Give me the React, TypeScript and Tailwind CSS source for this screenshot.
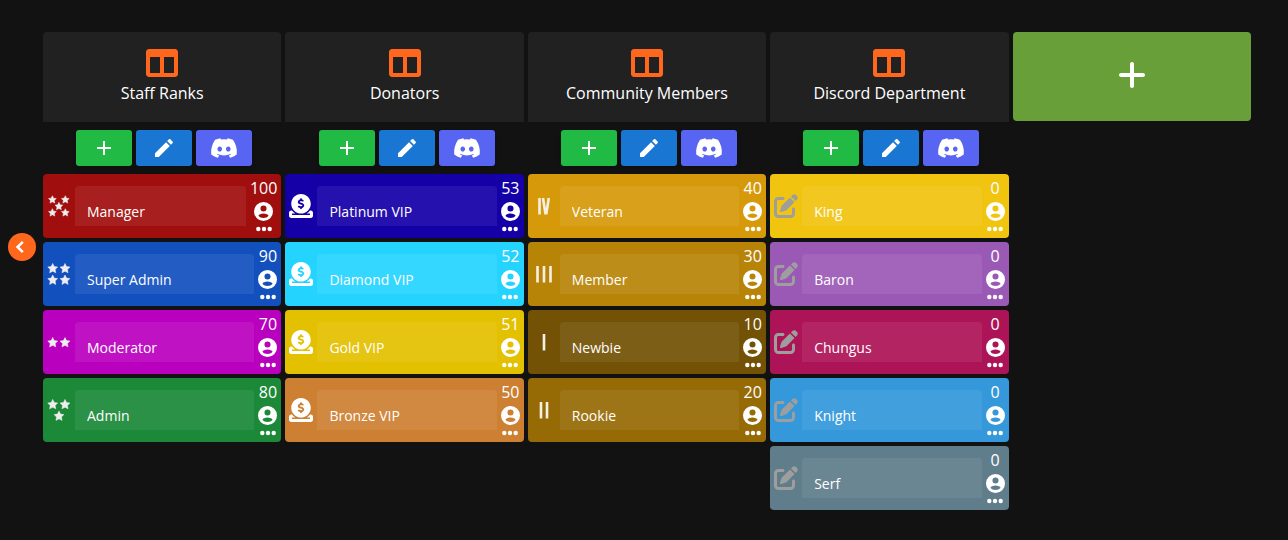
import React from "react";
import { FaColumns, FaDiscord } from "react-icons/fa";
import { FaPlus, FaCircleDollarToSlot, FaPenToSquare } from "react-icons/fa6";

type IconKind = "stars" | "coin" | "roman" | "edit";
type Rank = { name: string; weight: number; bg: string; icon: IconKind; count: number };
type Column = { title: string; ranks: Rank[] };

const columns: Column[] = [
  {
    title: "Staff Ranks",
    ranks: [
      { name: "Manager", weight: 100, bg: "bg-[#a00e0e]", icon: "stars", count: 5 },
      { name: "Super Admin", weight: 90, bg: "bg-[#1250be]", icon: "stars", count: 4 },
      { name: "Moderator", weight: 70, bg: "bg-[#b900be]", icon: "stars", count: 2 },
      { name: "Admin", weight: 80, bg: "bg-[#1b8938]", icon: "stars", count: 3 },
    ],
  },
  {
    title: "Donators",
    ranks: [
      { name: "Platinum VIP", weight: 53, bg: "bg-[#1500a8]", icon: "coin", count: 0 },
      { name: "Diamond VIP", weight: 52, bg: "bg-[#24d4ff]", icon: "coin", count: 0 },
      { name: "Gold VIP", weight: 51, bg: "bg-[#e3c000]", icon: "coin", count: 0 },
      { name: "Bronze VIP", weight: 50, bg: "bg-[#cd7f32]", icon: "coin", count: 0 },
    ],
  },
  {
    title: "Community Members",
    ranks: [
      { name: "Veteran", weight: 40, bg: "bg-[#d6990a]", icon: "roman", count: 4 },
      { name: "Member", weight: 30, bg: "bg-[#b88408]", icon: "roman", count: 3 },
      { name: "Newbie", weight: 10, bg: "bg-[#735205]", icon: "roman", count: 1 },
      { name: "Rookie", weight: 20, bg: "bg-[#966b06]", icon: "roman", count: 2 },
    ],
  },
  {
    title: "Discord Department",
    ranks: [
      { name: "King", weight: 0, bg: "bg-[#f1c40f]", icon: "edit", count: 0 },
      { name: "Baron", weight: 0, bg: "bg-[#9b59b6]", icon: "edit", count: 0 },
      { name: "Chungus", weight: 0, bg: "bg-[#ad1457]", icon: "edit", count: 0 },
      { name: "Knight", weight: 0, bg: "bg-[#3498db]", icon: "edit", count: 0 },
      { name: "Serf", weight: 0, bg: "bg-[#607d8b]", icon: "edit", count: 0 },
    ],
  },
];

// Each star is [centre x, centre y, radius] in a 24 unit box.
const starLayouts: Record<number, [number, number, number][]> = {
  2: [[5.7, 12.7, 5.2], [18, 12.7, 5.2]],
  3: [[5.7, 6.6, 5.2], [18, 6.6, 5.2], [12, 18.2, 5.2]],
  4: [[5.7, 6.6, 5.2], [18, 6.6, 5.2], [5.7, 18.2, 5.2], [18, 18.2, 5.2]],
  5: [[5.4, 5.8, 4.1], [18.3, 5.8, 4.1], [11.9, 12.4, 4.1], [5.4, 18.8, 4.1], [18.3, 18.8, 4.1]],
};

function starPoints(cx: number, cy: number, r: number) {
  return Array.from({ length: 10 }, (_, i) => {
    const radius = i % 2 ? r * 0.5 : r;
    const angle = (Math.PI / 5) * i - Math.PI / 2;
    return `${cx + radius * Math.cos(angle)},${cy + radius * Math.sin(angle)}`;
  }).join(" ");
}

const romanPaths: Record<number, string> = {
  1: "M12 4v16.500",
  2: "M9 4v16.500M15 4v16.500",
  3: "M5.500 4v16.500M12 4v16.500M18.500 4v16.500",
  4: "M7.500 4v16.500M11 4l2.400 15.300h1L16.800 4",
};

function RankIcon({ rank }: { rank: Rank }) {
  if (rank.icon === "coin") return <FaCircleDollarToSlot className="size-6" />;
  if (rank.icon === "edit") return <FaPenToSquare className="size-6 text-[#9e9e9e]" />;
  if (rank.icon === "roman")
    return (
      <svg viewBox="0 0 24 24" className="size-6" fill="none" stroke="#f5f0e6" strokeWidth="2.6">
        <path d={romanPaths[rank.count]} />
      </svg>
    );
  return (
    <svg viewBox="0 0 24 24" className="size-6" fill="#eeeeee" stroke="#eeeeee" strokeWidth=".5" strokeLinejoin="round">
      {starLayouts[rank.count].map(([x, y, r]) => (
        <polygon key={`${x}-${y}`} points={starPoints(x, y, r)} />
      ))}
    </svg>
  );
}

const mdi = {
  plus: "M19 13h-6v6h-2v-6H5v-2h6V5h2v6h6v2z",
  pencil:
    "M20.710 7.040c.39-.39.39-1.040 0-1.410l-2.340-2.340c-.37-.39-1.020-.39-1.410 0l-1.840 1.830 3.750 3.750M3 17.250V21h3.750L17.810 9.930l-3.750-3.750L3 17.250z",
};

function Icon({ d, className }: { d: string; className: string }) {
  return (
    <svg viewBox="0 0 24 24" fill="currentColor" className={className} aria-hidden="true">
      <path d={d} />
    </svg>
  );
}

function AccountIcon() {
  return (
    <svg viewBox="0 0 20 20" fill="currentColor" className="size-[19px]" aria-hidden="true">
      <path
        fillRule="evenodd"
        d="M10 0a10 10 0 1 0 0 20 10 10 0 0 0 0-20zm0 3.600a3.200 3.200 0 1 1 0 6.400 3.200 3.200 0 0 1 0-6.400zm0 8.400c2.600 0 4.900 1 5.300 2.400-1.200 1.500-3 2.400-5.300 2.400s-4.100-.9-5.300-2.400C5.100 13 7.400 12 10 12z"
      />
    </svg>
  );
}

function RankCard({ rank }: { rank: Rank }) {
  return (
    <li className={`flex h-16 items-center gap-1 rounded px-1 ${rank.bg}`}>
      <span className="flex w-6 shrink-0 justify-center">
        <RankIcon rank={rank} />
      </span>
      <input
        aria-label="Rank name"
        defaultValue={rank.name}
        className="h-10 min-w-0 flex-1 rounded-t bg-white/[0.07] px-3 pt-2.5 text-sm text-white outline-none"
      />
      <div className="flex h-full shrink-0 flex-col items-center pt-0.5">
        <span className="text-base leading-6">{rank.weight}</span>
        <button type="button" aria-label={`${rank.name} members`} className="mt-0.5 block">
          <AccountIcon />
        </button>
        <button type="button" aria-label={`${rank.name} options`} className="mt-[5px] block">
          <svg viewBox="0 0 16 6" className="h-1.5 w-4" fill="currentColor">
            <circle cx="2.300" cy="3" r="2.200" />
            <circle cx="8" cy="3" r="2.200" />
            <circle cx="13.700" cy="3" r="2.200" />
          </svg>
        </button>
      </div>
    </li>
  );
}

const action = "flex h-9 w-14 items-center justify-center rounded-[3px] shadow-md";

export default function App() {
  return (
    <main className="flex min-h-screen items-start bg-[#121212] pt-8 pr-[37px] pl-2 font-['Open_Sans',sans-serif] text-white">
      <button
        type="button"
        aria-label="Back"
        className="mt-[201px] mr-[7px] flex size-7 shrink-0 items-center justify-center rounded-full bg-[#ff671d]"
      >
        <svg viewBox="0 0 24 24" className="size-6" fill="none" stroke="currentColor" strokeWidth="2.6">
          <path d="M12.800 6.800 7.600 12l5.200 5.200" />
        </svg>
      </button>
      <div className="grid flex-1 grid-cols-5 gap-1">
        {columns.map((column) => (
          <section key={column.title}>
            <header className="flex h-[90px] flex-col items-center rounded-t bg-[#212121] pt-[15px]">
              <FaColumns className="size-8 text-[#ff671d]" />
              <h2 className="mt-0.5 text-base leading-6">{column.title}</h2>
            </header>
            <div className="flex justify-center gap-1 py-2 pl-1">
              <button type="button" aria-label="Add rank" className={`${action} bg-[#21ba45]`}>
                <Icon d={mdi.plus} className="size-6" />
              </button>
              <button type="button" aria-label="Edit column" className={`${action} bg-[#1976d2]`}>
                <Icon d={mdi.pencil} className="size-6" />
              </button>
              <button type="button" aria-label="Discord" className={`${action} bg-[#5865f2]`}>
                <FaDiscord className="size-7" />
              </button>
            </div>
            <ul className="flex flex-col gap-1">
              {column.ranks.map((rank) => (
                <RankCard key={rank.name} rank={rank} />
              ))}
            </ul>
          </section>
        ))}
        <button
          type="button"
          aria-label="Add column"
          className="flex h-[89px] items-center justify-center rounded bg-[#689f38] pb-1"
        >
          <FaPlus className="size-8" />
        </button>
      </div>
    </main>
  );
}
